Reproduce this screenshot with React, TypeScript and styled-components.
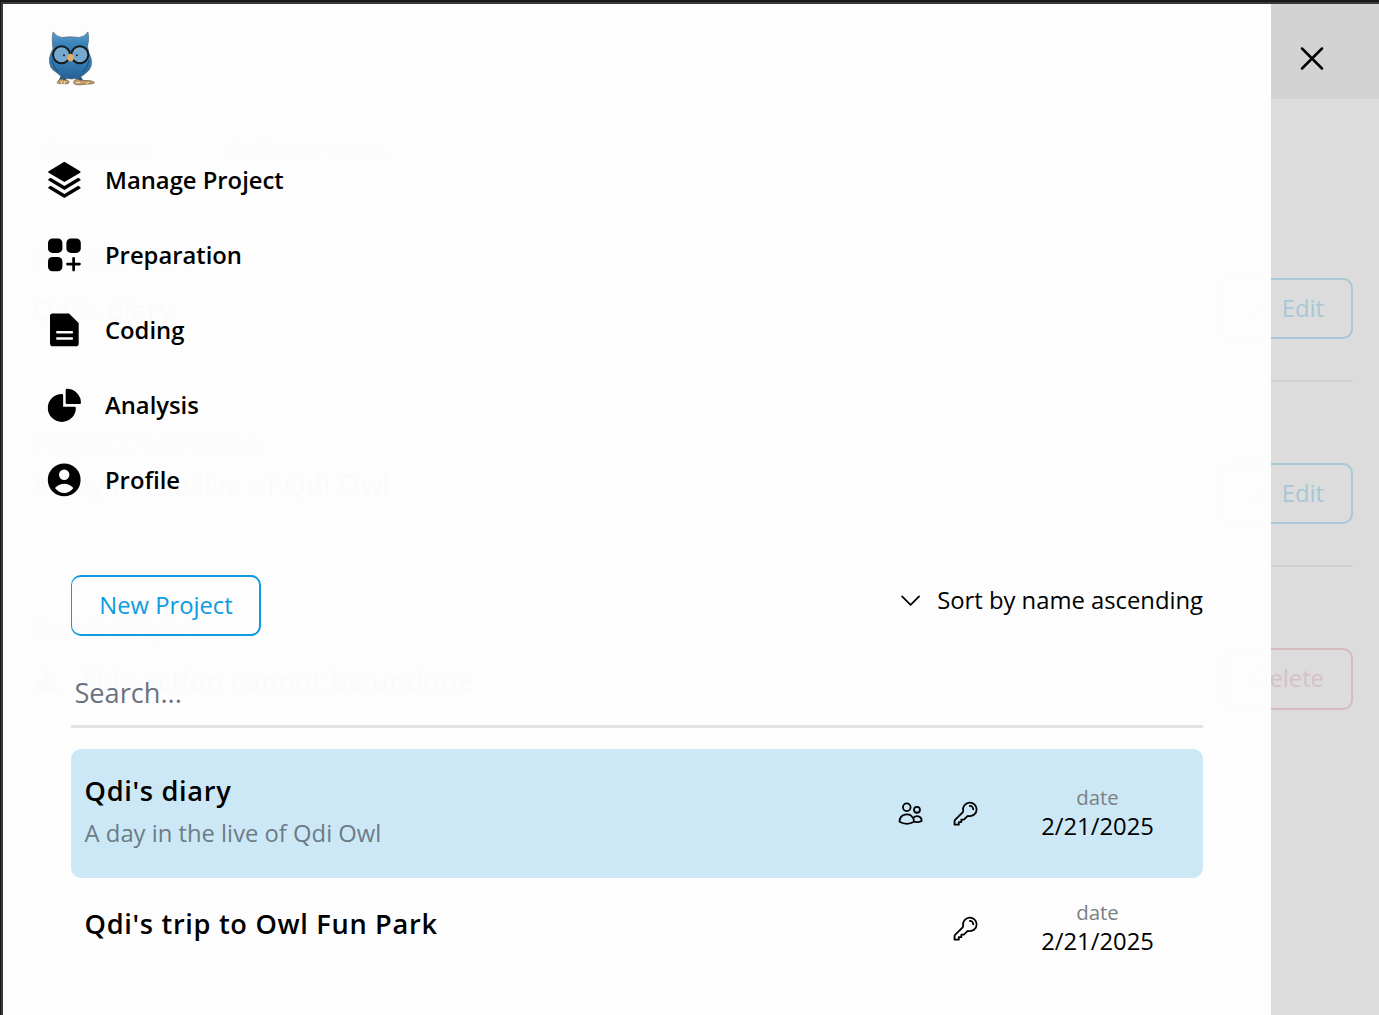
import React from "react";
import styled, { createGlobalStyle } from "styled-components";
import { HiOutlineKey, HiOutlineUsers, HiOutlineChevronDown, HiOutlineXMark, HiOutlinePencil, HiChartPie } from "react-icons/hi2";
import { RiStackFill } from "react-icons/ri";

const GlobalStyle = createGlobalStyle`
  *, *::before, *::after { box-sizing: border-box; }
  body { margin: 0; background: #dcdcdc; font-family: "Open Sans", "Noto Sans", sans-serif; color: #000; }
  button, input { font: inherit; }
`;

const Frame = styled.div`
  position: relative;
  height: 1015px;
  overflow: hidden;
  border-top: 2px solid #19191b;
  border-left: 1px solid #19191b;
`;

const Viewport = styled.div`
  height: 100%;
  border-top: 2px solid #39393b;
  border-left: 2px solid #39393b;
  background: #dcdcdc;
`;

const PageHeader = styled.header`
  height: 95px;
  background: #d3d3d3;
`;

const Page = styled.main`
  padding: 0 26px 0 29px;
  color: #8c8c8c;
`;

const PageTabs = styled.div`
  height: 104px;
  display: flex;
  align-items: center;
  gap: 74px;
  padding-left: 8px;
  font-size: 23.8px;
  color: #b0b0b0;
  letter-spacing: 1px;
`;

const Setting = styled.section<{ $last?: boolean }>`
  height: 185px;
  display: flex;
  justify-content: space-between;
  padding-top: 36px;
  border-bottom: 2px solid ${(p) => (p.$last ? "transparent" : "#d0d0d0")};
  &:first-of-type { height: 179px; padding-top: 30px; }
`;

const SettingText = styled.div<{ $gap: number }>`
  display: flex;
  flex-direction: column;
  padding-top: 4px;
  gap: ${(p) => p.$gap}px;
`;

const SettingLabel = styled.div`
  font-size: 23.8px;
  line-height: 40px;
  letter-spacing: 1px;
  color: #b8b8b8;
`;

const SettingValue = styled.div`
  display: flex;
  gap: 20px;
  align-items: center;
  font-size: 27.2px;
  line-height: 40px;
  letter-spacing: 0.025em;
`;

const PageButton = styled.button<{ $danger?: boolean }>`
  width: ${(p) => (p.$danger ? 130 : 133)}px;
  height: ${(p) => (p.$danger ? 62 : 61)}px;
  margin-top: 45px;
  padding: 0 27px ${(p) => (p.$danger ? 3 : 2)}px;
  display: flex;
  align-items: center;
  justify-content: flex-end;
  gap: 10px;
  background: transparent;
  border: 2px solid ${(p) => (p.$danger ? "#d5bcbf" : "#a7c7d7")};
  border-radius: 10px;
  color: ${(p) => (p.$danger ? "#d7c1c3" : "#a7c7d7")};
  font-size: 23.8px;
  svg { width: 24px; height: 24px; flex: none; }
`;

const Drawer = styled.aside`
  position: absolute;
  top: 2px;
  left: 2px;
  width: 1268px;
  height: 1011px;
  padding: 24px 0 0 41px;
  background: rgba(254, 254, 254, 0.97);
`;

const CloseButton = styled.button`
  position: absolute;
  top: 36px;
  right: 47px;
  width: 40px;
  height: 41px;
  padding: 0;
  border: 0;
  background: none;
  svg { display: block; width: 40px; height: 41px; }
`;

const Logo = styled.svg`
  display: block;
  width: 54px;
  height: 60px;
  margin-left: 1px;
`;

const Nav = styled.nav`
  margin-top: 54px;
  display: flex;
  flex-direction: column;
`;

const NavItem = styled.a`
  height: 75px;
  display: flex;
  align-items: center;
  gap: 20.2px;
  font-size: 23.8px;
  font-weight: 580;
  svg { width: 40.8px; height: 40.8px; margin-top: 2px; }
`;

const Projects = styled.section`
  width: 1132px;
  margin: 58px 0 0 27px;
`;

const Toolbar = styled.div`
  display: flex;
  justify-content: space-between;
  align-items: flex-start;
`;

const NewButton = styled.button`
  width: 190px;
  height: 61px;
  padding: 0 0 2px 1px;
  border: 2px solid #0d9bdf;
  border-left-width: 1px;
  border-radius: 10px;
  background: transparent;
  color: #0d9bdf;
  font-size: 23.8px;
`;

const Sort = styled.div`
  display: flex;
  align-items: center;
  gap: 13.400px;
  height: 50px;
  font-size: 23.8px;
  svg { width: 27.2px; height: 27.2px; margin-top: 2px; }
`;

const Search = styled.input`
  display: block;
  width: 100%;
  height: 69px;
  margin: 23px 0 21px;
  padding: 0 3.4px;
  border: 0;
  border-bottom: 3px solid #e2e3e3;
  background: transparent;
  font-size: 27.2px;
  &::placeholder { color: #6b7280; opacity: 1; }
`;

const Row = styled.article<{ $active?: boolean }>`
  height: ${(p) => (p.$active ? 129 : 102)}px;
  display: flex;
  align-items: center;
  padding: 0 49px 0 13.6px;
  border-radius: 10px;
  background: ${(p) => (p.$active ? "#cce8f6" : "transparent")};
`;

const RowText = styled.div<{ $single?: boolean }>`
  flex: 1;
  padding-bottom: ${(p) => (p.$single ? 11 : 3)}px;
`;

const RowTitle = styled.h2`
  margin: 0;
  font-size: 27.2px;
  line-height: 42px;
  font-weight: 580;
  letter-spacing: 0.025em;
`;

const RowNote = styled.p`
  margin: 0;
  font-size: 23.8px;
  line-height: 42px;
  color: #6b7c86;
`;

const RowIcons = styled.div`
  display: flex;
  gap: 27.2px;
  margin-right: 62px;
  svg { width: 27.2px; height: 27.2px; stroke-width: 1.6; }
`;

const RowDate = styled.div`
  width: 113px;
  padding-bottom: 4px;
  text-align: center;
  font-size: 23.8px;
  line-height: 29px;
  white-space: nowrap;
`;

const DateLabel = styled.div`
  font-size: 20.4px;
  color: #7b8082;
`;

const OwlLogo = () => (
  <Logo viewBox="0 0 54 60">
    <defs>
      <linearGradient id="body" x1="0" y1="0" x2="0" y2="1">
        <stop offset="0" stopColor="#5b9fca" />
        <stop offset="0.25" stopColor="#3b84ba" />
        <stop offset="0.7" stopColor="#3279b0" />
        <stop offset="1" stopColor="#245f93" />
      </linearGradient>
    </defs>
    <path d="M16 47l-2 5h7l1-5zM30 47l2 5h6l-3-5z" fill="#245783" />
    <path d="M14 52q3-2 5 0 5-1 5 3-4 1.500-6 .5-5 1-6-1zM30 52q3-2 5 .5l8 0q4 0 6.500 2-2 2-6 1.500l-9 .8q-6 0-6-2.500z" fill="#c99d62" stroke="#625846" strokeWidth="0.7" />
    <path d="M17 53l-1 3M20 53l-1 3M31 55l4-1M44 54l-3 2" stroke="#eee3c8" strokeWidth="1" />
    <path d="M8 4q4 5 9 5.500 8-1.500 17 0 5-.5 9-5.500 1.500 8-.5 14 .5 6 3.500 12 2.500 9-4.500 14.500-6 6-15 6.500-9-.5-15-6.500-8-4-7-14.500 1-5 3.500-9Q6.500 10 8 4z" fill="url(#body)" stroke="#465c69" strokeWidth="0.6" />
    <path d="M7 32q1 7 6.500 12M44 32q-1 7-6.500 12" fill="none" stroke="#205784" strokeWidth="1.3" />
    <circle cx="16.5" cy="26.7" r="8.5" fill="#76a9d0" stroke="#14191d" strokeWidth="2" />
    <circle cx="34.8" cy="26.7" r="8.5" fill="#76a9d0" stroke="#14191d" strokeWidth="2" />
    <circle cx="19" cy="27.3" r="1" fill="#15283a" />
    <circle cx="31.8" cy="27.3" r="1" fill="#15283a" />
    <path d="M25.500 25.500c3 1 4.500 3.500 2.700 6.500q-2.700 3-5.400 0c-1.500-3-.3-5.500 2.700-6.500z" fill="#e5ad65" />
  </Logo>
);

const PreparationIcon = () => (
  <svg viewBox="0 0 40.8 40.8">
    <rect x="4" y="3.5" width="14.4" height="14.4" rx="4.5" />
    <rect x="22.4" y="3.5" width="14.4" height="14.4" rx="4.5" />
    <rect x="4" y="21.9" width="14.4" height="14.4" rx="4.5" />
    <path d="M29.600 23.300v11.800M23.500 29.100h12" stroke="#000" strokeWidth="2.7" strokeLinecap="round" />
  </svg>
);

const CodingIcon = () => (
  <svg viewBox="0 0 40.8 40.8">
    <path d="M8.500 3.500H25l9.700 9.500v20.500a2.800 2.800 0 0 1-2.800 2.800H8.800A2.800 2.800 0 0 1 6 33.500V6A2.500 2.500 0 0 1 8.500 3.500z" />
    <path d="M13.300 22.300h14.600M13.300 28.500h14.600" stroke="#fdfdfd" strokeWidth="2.5" strokeLinecap="round" />
  </svg>
);

const ProfileIcon = () => (
  <svg viewBox="0 0 40.8 40.8">
    <circle cx="20.2" cy="19.9" r="16.4" />
    <circle cx="20.2" cy="14.8" r="5.2" fill="#fdfdfd" />
    <path d="M11 27.900q4.500-4.200 9.200-4.200t9.200 4.200q-3.800 5-9.200 5t-9.200-5z" fill="#fdfdfd" />
  </svg>
);

const navItems = [
  { label: "Manage Project", icon: <RiStackFill /> },
  { label: "Preparation", icon: <PreparationIcon /> },
  { label: "Coding", icon: <CodingIcon /> },
  { label: "Analysis", icon: <HiChartPie /> },
  { label: "Profile", icon: <ProfileIcon /> },
];

export default function App() {
  return (
    <>
      <GlobalStyle />
      <Frame>
        <Viewport>
          <PageHeader />
          <Page>
            <PageTabs><span>Overview</span><span>Collaboration</span></PageTabs>
            <Setting>
              <SettingText $gap={13}>
                <SettingLabel>Project Name</SettingLabel>
                <SettingValue>Qdi's diary</SettingValue>
              </SettingText>
              <PageButton><HiOutlinePencil />Edit</PageButton>
            </Setting>
            <Setting>
              <SettingText $gap={3}>
                <SettingLabel>Project Description</SettingLabel>
                <SettingValue>A day in the live of Qdi Owl</SettingValue>
              </SettingText>
              <PageButton><HiOutlinePencil />Edit</PageButton>
            </Setting>
            <Setting $last>
              <SettingText $gap={14}>
                <SettingLabel>Delete Project</SettingLabel>
                <SettingValue>
                  <svg width="28" height="28" viewBox="0 0 28 28"><path d="M14 2l13 24H1z" fill="#a0a0a0" /></svg>
                  This action cannot be undone
                </SettingValue>
              </SettingText>
              <PageButton $danger>Delete</PageButton>
            </Setting>
          </Page>
        </Viewport>
        <Drawer>
          <OwlLogo />
          <Nav>
            {navItems.map((item) => (
              <NavItem key={item.label}>{item.icon}{item.label}</NavItem>
            ))}
          </Nav>
          <Projects>
            <Toolbar>
              <NewButton>New Project</NewButton>
              <Sort><HiOutlineChevronDown />Sort by name ascending</Sort>
            </Toolbar>
            <Search placeholder="Search..." />
            <Row $active>
              <RowText>
                <RowTitle>Qdi's diary</RowTitle>
                <RowNote>A day in the live of Qdi Owl</RowNote>
              </RowText>
              <RowIcons><HiOutlineUsers /><HiOutlineKey /></RowIcons>
              <RowDate><DateLabel>date</DateLabel>2/21/2025</RowDate>
            </Row>
            <Row>
              <RowText $single><RowTitle>Qdi's trip to Owl Fun Park</RowTitle></RowText>
              <RowIcons><HiOutlineKey /></RowIcons>
              <RowDate><DateLabel>date</DateLabel>2/21/2025</RowDate>
            </Row>
          </Projects>
        </Drawer>
        <CloseButton aria-label="Close"><HiOutlineXMark /></CloseButton>
      </Frame>
    </>
  );
}
